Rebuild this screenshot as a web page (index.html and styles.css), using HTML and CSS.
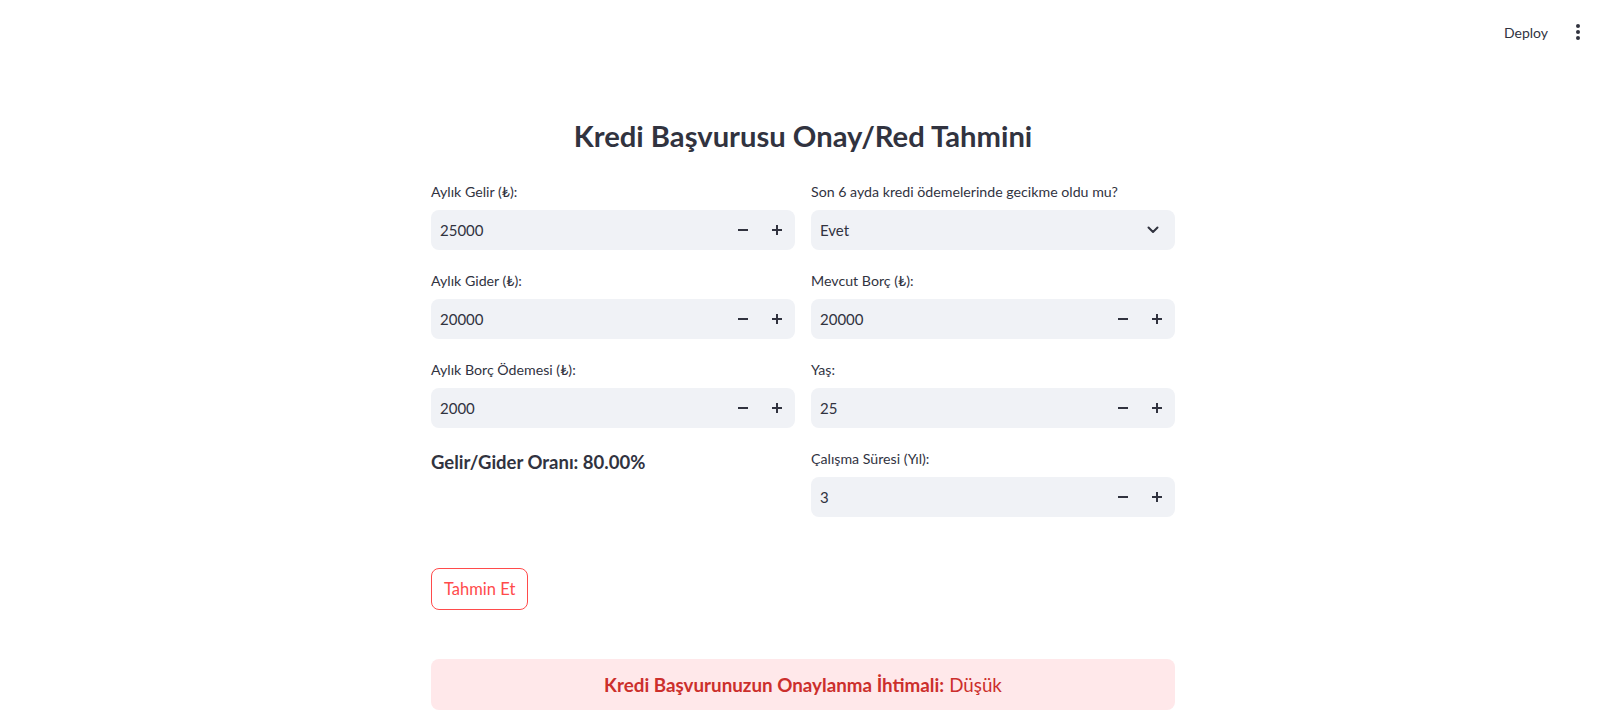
FILE: index.html
```html
<!DOCTYPE html>
<html lang="tr">
<head>
<meta charset="utf-8">
<title>Kredi Başvurusu Onay/Red Tahmini</title>
<link rel="stylesheet" href="styles.css">
</head>
<body>
<header class="topbar">
  <span class="deploy">Deploy</span>
  <span class="menu" aria-label="menu"><i></i><i></i><i></i></span>
</header>
<main class="main">
  <h1 class="title">Kredi Başvurusu Onay/Red Tahmini</h1>
  <div class="cols">
    <div class="col">
      <div class="field">
        <label class="label">Aylık Gelir (₺):</label>
        <div class="input">
          <span class="value">25000</span>
          <span class="step minus"><svg width="10" height="10" viewBox="0 0 10 10"><path d="M0 5h10" stroke="#31333f" stroke-width="2"/></svg></span>
          <span class="step plus"><svg width="10" height="10" viewBox="0 0 10 10"><path d="M0 5h10M5 0v10" stroke="#31333f" stroke-width="2"/></svg></span>
        </div>
      </div>
      <div class="field">
        <label class="label">Aylık Gider (₺):</label>
        <div class="input">
          <span class="value">20000</span>
          <span class="step minus"><svg width="10" height="10" viewBox="0 0 10 10"><path d="M0 5h10" stroke="#31333f" stroke-width="2"/></svg></span>
          <span class="step plus"><svg width="10" height="10" viewBox="0 0 10 10"><path d="M0 5h10M5 0v10" stroke="#31333f" stroke-width="2"/></svg></span>
        </div>
      </div>
      <div class="field">
        <label class="label">Aylık Borç Ödemesi (₺):</label>
        <div class="input">
          <span class="value">2000</span>
          <span class="step minus"><svg width="10" height="10" viewBox="0 0 10 10"><path d="M0 5h10" stroke="#31333f" stroke-width="2"/></svg></span>
          <span class="step plus"><svg width="10" height="10" viewBox="0 0 10 10"><path d="M0 5h10M5 0v10" stroke="#31333f" stroke-width="2"/></svg></span>
        </div>
      </div>
      <p class="ratio">Gelir/Gider Oranı: 80.00%</p>
    </div>
    <div class="col">
      <div class="field">
        <label class="label">Son 6 ayda kredi ödemelerinde gecikme oldu mu?</label>
        <div class="input select">
          <span class="value">Evet</span>
          <span class="chev"><svg width="12" height="8" viewBox="0 0 12 8"><path d="M1.5 1.5L6 6l4.5-4.5" fill="none" stroke="#31333f" stroke-width="2" stroke-linecap="round" stroke-linejoin="round"/></svg></span>
        </div>
      </div>
      <div class="field">
        <label class="label">Mevcut Borç (₺):</label>
        <div class="input">
          <span class="value">20000</span>
          <span class="step minus"><svg width="10" height="10" viewBox="0 0 10 10"><path d="M0 5h10" stroke="#31333f" stroke-width="2"/></svg></span>
          <span class="step plus"><svg width="10" height="10" viewBox="0 0 10 10"><path d="M0 5h10M5 0v10" stroke="#31333f" stroke-width="2"/></svg></span>
        </div>
      </div>
      <div class="field">
        <label class="label">Yaş:</label>
        <div class="input">
          <span class="value">25</span>
          <span class="step minus"><svg width="10" height="10" viewBox="0 0 10 10"><path d="M0 5h10" stroke="#31333f" stroke-width="2"/></svg></span>
          <span class="step plus"><svg width="10" height="10" viewBox="0 0 10 10"><path d="M0 5h10M5 0v10" stroke="#31333f" stroke-width="2"/></svg></span>
        </div>
      </div>
      <div class="field">
        <label class="label">Çalışma Süresi (Yıl):</label>
        <div class="input">
          <span class="value">3</span>
          <span class="step minus"><svg width="10" height="10" viewBox="0 0 10 10"><path d="M0 5h10" stroke="#31333f" stroke-width="2"/></svg></span>
          <span class="step plus"><svg width="10" height="10" viewBox="0 0 10 10"><path d="M0 5h10M5 0v10" stroke="#31333f" stroke-width="2"/></svg></span>
        </div>
      </div>
    </div>
  </div>
  <div class="actions">
    <button class="btn">Tahmin Et</button>
  </div>
  <div class="result"><strong>Kredi Başvurunuzun Onaylanma İhtimali:</strong> Düşük</div>
</main>
</body>
</html>
```

FILE: styles.css
```css
* { box-sizing: border-box; }
html, body { margin: 0; padding: 0; background: #ffffff; }
body {
  font-family: Lato, "Noto Sans", "Liberation Sans", sans-serif;
  color: #31333f;
  height: 725px;
  overflow: hidden;
}
.topbar {
  height: 60px;
  display: flex;
  align-items: center;
  justify-content: flex-end;
  padding: 4px 20px 0 0;
  gap: 24px;
}
.deploy {
  font-size: 14px;
  color: #31333f;
}
.menu {
  display: flex;
  flex-direction: column;
  gap: 2px;
  padding: 0 4px;
}
.menu i {
  display: block;
  width: 4px;
  height: 4px;
  border-radius: 50%;
  background: #31333f;
}
.main {
  width: 746px;
  padding-left: 2px;
  margin: 0 auto;
}
.title {
  margin: 58px 0 0;
  font-size: 29.2px;
  line-height: 36px;
  font-weight: 700;
  text-align: center;
  color: #31333f;
}
.cols {
  margin-top: 28px;
  display: grid;
  grid-template-columns: 1fr 1fr;
  gap: 16px;
  align-items: start;
}
.col {
  display: flex;
  flex-direction: column;
  gap: 21px;
}
.field {
  display: flex;
  flex-direction: column;
}
.label {
  font-size: 14.2px;
  line-height: 20px;
  height: 20px;
  margin-bottom: 8px;
  color: #31333f;
}
.input {
  height: 40px;
  background: #f0f2f6;
  border-radius: 8px;
  display: flex;
  align-items: center;
  padding-left: 9px;
}
.value {
  flex: 1;
  font-size: 15px;
  color: #31333f;
}
.step {
  width: 32px;
  height: 40px;
  display: flex;
  align-items: center;
  justify-content: center;
}
.step.minus { margin-right: 2px; }
.step.plus { margin-right: 2px; }
.select { padding-right: 16px; }
.chev { display: flex; align-items: center; }
.ratio {
  margin: 0;
  font-size: 18.5px;
  line-height: 22px;
  font-weight: 700;
  color: #31333f;
  padding-top: 2px;
}
.actions {
  margin-top: 51px;
}
.btn {
  font-family: inherit;
  font-size: 16.5px;
  height: 42px;
  padding: 0 12px;
  background: #ffffff;
  color: #ff4b4b;
  border: 1px solid #ff4b4b;
  border-radius: 8px;
}
.result {
  margin-top: 49px;
  height: 51px;
  border-radius: 8px;
  background: #ffe8ea;
  color: #cc2f2c;
  font-size: 18.8px;
  display: flex;
  align-items: center;
  justify-content: center;
  gap: 5px;
}
.result strong { font-weight: 700; }
```
